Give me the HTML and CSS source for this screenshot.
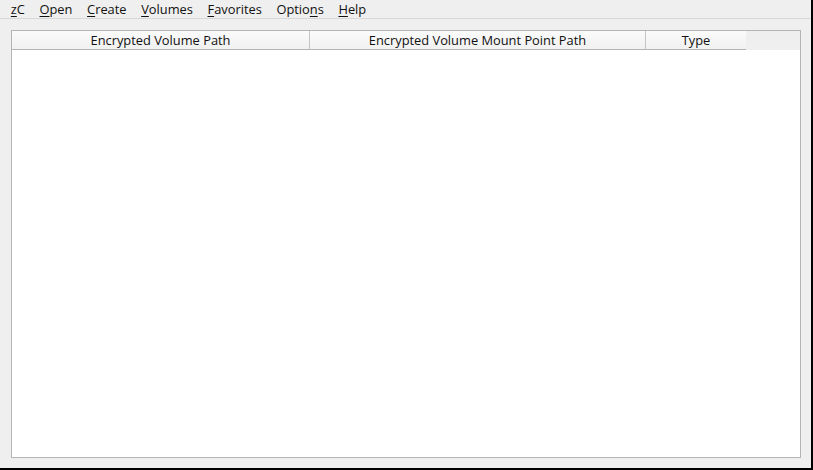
FILE: index.html
```html
<!DOCTYPE html>
<html>
<head>
<meta charset="utf-8">
<link rel="stylesheet" href="styles.css">
</head>
<body>
<div class="window">
  <div class="menubar">
    <span class="menu"><u>z</u>C</span>
    <span class="menu"><u>O</u>pen</span>
    <span class="menu"><u>C</u>reate</span>
    <span class="menu"><u>V</u>olumes</span>
    <span class="menu"><u>F</u>avorites</span>
    <span class="menu">Optio<u>n</u>s</span>
    <span class="menu"><u>H</u>elp</span>
  </div>
  <div class="content">
    <div class="table">
      <div class="header">
        <div class="hcell c1">Encrypted Volume Path</div>
        <div class="hcell c2">Encrypted Volume Mount Point Path</div>
        <div class="hcell c3">Type</div>
      </div>
      <div class="body"></div>
    </div>
  </div>
</div>
</body>
</html>
```
FILE: styles.css
```css
html, body {
  margin: 0;
  padding: 0;
  background: #000;
}
.window {
  box-sizing: border-box;
  width: 813px;
  height: 470px;
  background: #efefef;
  border-right: 2px solid #000;
  border-bottom: 2px solid #000;
  display: flex;
  flex-direction: column;
  font-family: "Open Sans", "Noto Sans", sans-serif;
  font-size: 12.85px;
  color: #111;
}
.menubar {
  height: 18px;
  border-bottom: 1px solid #d8d8d8;
  display: flex;
  align-items: center;
  padding-left: 3.5px;
  line-height: 18px;
}
.menu {
  padding: 0 7.3px;
}
.menu u {
  text-decoration-thickness: 1px;
  text-underline-offset: 2px;
}
.content {
  flex: 1;
  padding: 11px 10px 10px 11px;
  display: flex;
}
.table {
  flex: 1;
  border: 1px solid #b4b4b4;
  background: #fff;
  display: flex;
  flex-direction: column;
}
.header {
  display: flex;
  height: 19px;
  background: #efefef;
}
.hcell {
  box-sizing: border-box;
  height: 19px;
  line-height: 18px;
  text-align: center;
  background: linear-gradient(#fbfbfb, #f1f1f1);
  border-bottom: 1px solid #b4b4b4;
  border-right: 1px solid #c4c4c4;
}
.c1 { width: 298px; }
.c2 { width: 336px; }
.c3 { width: 100px; border-right: none; }
.body {
  flex: 1;
  background: #fff;
}
```
